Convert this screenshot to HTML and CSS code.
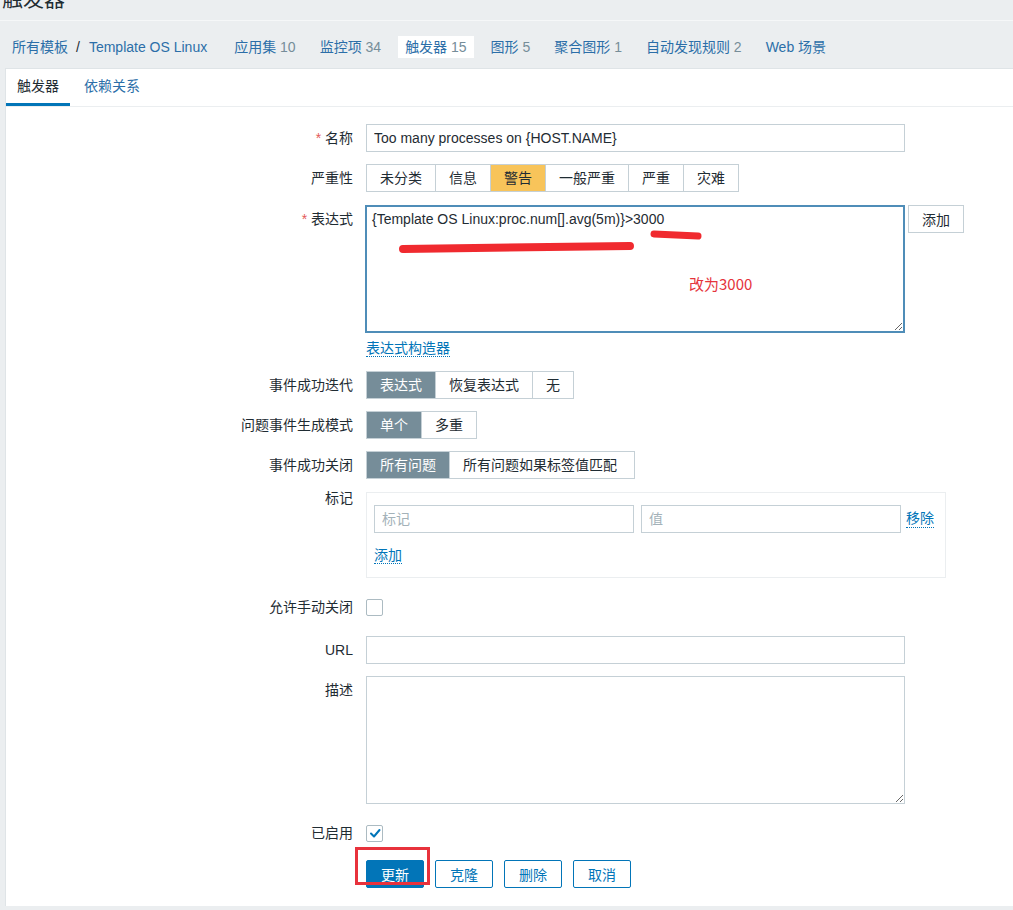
FILE: index.html
```html
<!DOCTYPE html>
<html lang="zh-CN">
<head>
<meta charset="utf-8">
<title>触发器</title>
<link rel="stylesheet" href="styles.css">
</head>
<body>
<header class="title-bar"><h1 class="page-title">触发器</h1></header>

<nav class="crumbs">
  <ul class="crumb-list">
    <li class="crumb-item crumb-first"><a class="nav-link">所有模板</a><span class="sep">/</span><a class="nav-link">Template OS Linux</a></li>
    <li class="crumb-item"><a class="nav-link">应用集</a> <span class="count">10</span></li>
    <li class="crumb-item"><a class="nav-link">监控项</a> <span class="count">34</span></li>
    <li class="crumb-item is-active"><span class="nav-link">触发器</span> <span class="count">15</span></li>
    <li class="crumb-item"><a class="nav-link">图形</a> <span class="count">5</span></li>
    <li class="crumb-item"><a class="nav-link">聚合图形</a> <span class="count">1</span></li>
    <li class="crumb-item"><a class="nav-link">自动发现规则</a> <span class="count">2</span></li>
    <li class="crumb-item"><a class="nav-link">Web 场景</a></li>
  </ul>
</nav>

<main class="panel">
  <div class="tabs">
    <span class="tab is-active">触发器</span>
    <span class="tab">依赖关系</span>
  </div>

  <form class="form">
    <div class="row">
      <label class="label"><span class="req">*</span> 名称</label>
      <div class="field"><input class="input wide" type="text" value="Too many processes on {HOST.NAME}"></div>
    </div>

    <div class="row">
      <label class="label">严重性</label>
      <div class="field">
        <div class="seg">
          <span class="seg-btn">未分类</span><span class="seg-btn">信息</span><span class="seg-btn is-warning">警告</span><span class="seg-btn">一般严重</span><span class="seg-btn">严重</span><span class="seg-btn">灾难</span>
        </div>
      </div>
    </div>

    <div class="row row-expr">
      <label class="label"><span class="req">*</span> 表达式</label>
      <div class="field">
        <div class="expr-line">
          <div class="expr-wrap">
            <textarea class="textarea expr">{Template OS Linux:proc.num[].avg(5m)}&gt;3000</textarea>
            <svg class="scribble" width="540" height="128" viewBox="0 0 540 128">
              <path d="M289 29 L333 31" stroke="#f02a2f" stroke-width="7" stroke-linecap="round" fill="none"/>
              <path d="M38 44 Q150 43 265 41" stroke="#f02a2f" stroke-width="8" stroke-linecap="round" fill="none"/>
            </svg>
            <span class="note">改为3000</span>
          </div>
          <button type="button" class="btn-plain">添加</button>
        </div>
        <div class="builder-line"><a class="dotted-link">表达式构造器</a></div>
      </div>
    </div>

    <div class="row">
      <label class="label">事件成功迭代</label>
      <div class="field">
        <div class="seg"><span class="seg-btn is-on">表达式</span><span class="seg-btn">恢复表达式</span><span class="seg-btn">无</span></div>
      </div>
    </div>

    <div class="row">
      <label class="label">问题事件生成模式</label>
      <div class="field">
        <div class="seg"><span class="seg-btn is-on">单个</span><span class="seg-btn">多重</span></div>
      </div>
    </div>

    <div class="row">
      <label class="label">事件成功关闭</label>
      <div class="field">
        <div class="seg"><span class="seg-btn is-on">所有问题</span><span class="seg-btn wide-seg">所有问题如果标签值匹配</span></div>
      </div>
    </div>

    <div class="row row-tags">
      <label class="label label-top">标记</label>
      <div class="field">
        <div class="tags-box">
          <div class="tag-line">
            <input class="input tag-input" type="text" placeholder="标记">
            <input class="input tag-input" type="text" placeholder="值">
            <a class="dotted-link">移除</a>
          </div>
          <div class="add-line"><a class="dotted-link">添加</a></div>
        </div>
      </div>
    </div>

    <div class="row row-more">
      <label class="label">允许手动关闭</label>
      <div class="field center"><span class="checkbox"></span></div>
    </div>

    <div class="row row-more">
      <label class="label">URL</label>
      <div class="field"><input class="input wide" type="text"></div>
    </div>

    <div class="row">
      <label class="label">描述</label>
      <div class="field"><textarea class="textarea desc"></textarea></div>
    </div>

    <div class="row row-more">
      <label class="label">已启用</label>
      <div class="field center">
        <span class="checkbox"><svg width="14" height="14" viewBox="0 0 14 14"><path d="M3 7.5 L6 10.5 L11.5 4" stroke="#0275b8" stroke-width="2" fill="none" stroke-linecap="round" stroke-linejoin="round"/></svg></span>
      </div>
    </div>

    <div class="row row-btns">
      <span class="label"></span>
      <div class="field buttons">
        <span class="mark-wrap"><button type="button" class="btn btn-primary">更新</button><span class="red-box"></span></span>
        <button type="button" class="btn">克隆</button>
        <button type="button" class="btn">删除</button>
        <button type="button" class="btn">取消</button>
      </div>
    </div>
  </form>
</main>
</body>
</html>
```

FILE: styles.css
```css
* { box-sizing: border-box; }

html, body {
  margin: 0;
  padding: 0;
}

body {
  background: #ebeef0;
  color: #1f2c33;
  font-family: "Liberation Sans", "Noto Sans CJK SC", sans-serif;
  font-size: 14px;
  overflow: hidden;
}

.title-bar {
  height: 21px;
  overflow: hidden;
  border-bottom: 1px solid #f5f7f8;
}

.page-title {
  margin: -13px 0 0 2px;
  font-size: 21px;
  line-height: 24px;
  font-weight: normal;
  color: #1f2c33;
}

.crumbs {
  padding: 15px 0 10px 5px;
}

.crumb-list {
  list-style: none;
  margin: 0;
  padding: 0;
  display: flex;
  gap: 10px;
}

.crumb-item {
  height: 22px;
  line-height: 22px;
  padding: 0 7px;
  white-space: nowrap;
}

.crumb-first {
  margin-right: 3px;
}

.crumb-item.is-active {
  background: #ffffff;
}

.nav-link {
  color: #2b6ea8;
}

.sep {
  color: #1f2c33;
  margin: 0 9px 0 8px;
}

.count {
  color: #768d99;
}

.panel {
  margin-left: 5px;
  background: #ffffff;
  border-left: 1px solid #dfe4e7;
  border-top: 1px solid #dfe4e7;
  padding-bottom: 18px;
}

.tabs {
  display: flex;
  gap: 3px;
  border-bottom: 1px solid #ebeef0;
}

.tab {
  height: 37px;
  line-height: 34px;
  padding: 0 11px;
  color: #2b6ea8;
  border-bottom: 3px solid transparent;
}

.tab.is-active {
  color: #1f2c33;
  border-bottom-color: #0275b8;
}

.form {
  display: flex;
  flex-direction: column;
  gap: 12px;
  padding-top: 17px;
}

.row {
  display: grid;
  grid-template-columns: 347px 1fr;
  column-gap: 13px;
  align-items: start;
}

.row-expr { margin-top: 1px; }
.row-tags { margin-top: 1px; }
.row-more { margin-top: 3px; }
.row-btns { margin-top: 1px; }

.label {
  text-align: right;
  line-height: 28px;
  color: #1f2c33;
  white-space: nowrap;
}

.label-top {
  line-height: 12px;
}

.req {
  color: #e45959;
}

.field {
  min-height: 28px;
}

.field.center {
  display: flex;
  align-items: center;
  height: 28px;
}

.input {
  height: 28px;
  border: 1px solid #c5d0d6;
  background: #fff;
  font: inherit;
  color: #1f2c33;
  padding: 0 7px;
  outline: none;
}

.input::placeholder {
  color: #a4b2b9;
}

.wide {
  width: 539px;
}

.seg {
  display: inline-flex;
  border: 1px solid #c5d0d6;
  height: 28px;
  background: #fff;
}

.seg-btn {
  line-height: 26px;
  padding: 0 13px;
  border-left: 1px solid #c5d0d6;
  color: #1f2c33;
  white-space: nowrap;
}

.seg-btn:first-child { border-left: none; }

.seg-btn.is-warning {
  background: #f8c45a;
}

.seg-btn.is-on {
  background: #768d99;
  color: #ffffff;
}

.seg-btn.wide-seg {
  padding: 0 17px 0 13px;
}

.expr-line {
  display: flex;
  align-items: flex-start;
  gap: 3px;
}

.expr-wrap {
  position: relative;
  width: 540px;
  height: 128px;
  margin-left: -1px;
}

.textarea {
  display: block;
  border: 1px solid #c5d0d6;
  font: inherit;
  color: #1f2c33;
  padding: 5px 7px;
  outline: none;
  background: #fff;
}

.expr {
  width: 540px;
  height: 128px;
  border: 2px solid #4f8db8;
  padding: 4px 5px;
}

.desc {
  width: 539px;
  height: 128px;
}

.scribble {
  position: absolute;
  left: 0;
  top: 0;
  pointer-events: none;
}

.note {
  position: absolute;
  left: 324px;
  top: 70px;
  font-family: "Noto Sans CJK SC", sans-serif;
  font-size: 15px;
  line-height: 18px;
  color: #e5343c;
}

.btn-plain {
  height: 28px;
  padding: 0 13px;
  border: 1px solid #c5d0d6;
  background: #fff;
  font: inherit;
  color: #1f2c33;
}

.dotted-link {
  color: #0275b8;
  border-bottom: 1px dotted #0275b8;
  text-decoration: none;
}

.builder-line {
  margin-top: 6px;
  height: 20px;
  line-height: 18px;
}

.tags-box {
  width: 580px;
  border: 1px solid #ebeef0;
  padding: 12px 7px 12px;
}

.tag-line {
  display: flex;
  align-items: center;
  gap: 7px;
}

.tag-input {
  width: 260px;
}

.tag-line .dotted-link {
  margin-left: -2px;
  line-height: 17px;
}

.add-line {
  margin-top: 13px;
  height: 19px;
  line-height: 18px;
}

.checkbox {
  display: inline-flex;
  align-items: center;
  justify-content: center;
  width: 17px;
  height: 17px;
  border: 1px solid #acbbc2;
  border-radius: 2px;
  background: #fff;
}

.buttons {
  display: flex;
  gap: 11px;
}

.btn {
  height: 28px;
  padding: 0 14px;
  border: 1px solid #0275b8;
  background: #fff;
  color: #0275b8;
  font: inherit;
  border-radius: 2px;
}

.btn-primary {
  background: #0275b8;
  color: #fff;
}

.mark-wrap {
  position: relative;
  display: inline-block;
}

.red-box {
  position: absolute;
  left: -11px;
  top: -13px;
  width: 75px;
  height: 38px;
  border: 3px solid #e8323c;
  pointer-events: none;
}
```
